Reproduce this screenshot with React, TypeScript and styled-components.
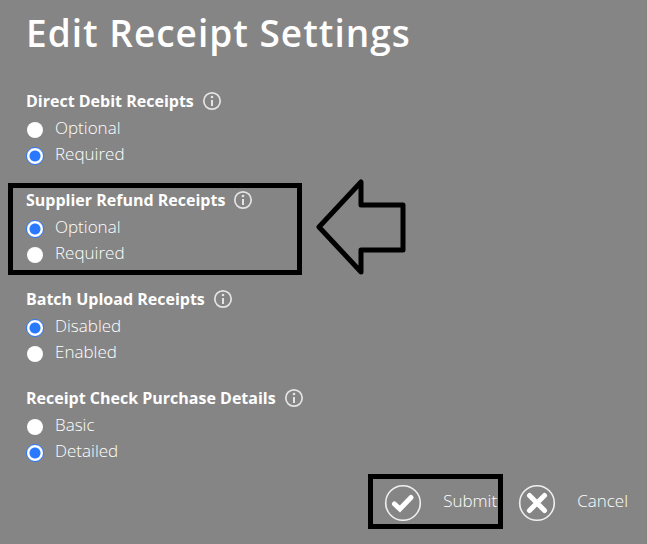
import React from "react";
import styled, { createGlobalStyle } from "styled-components";

const GlobalStyle = createGlobalStyle`
  *, *::before, *::after {
    box-sizing: border-box;
  }
  body {
    margin: 0;
    background: #858585;
    color: #fff;
    font-family: "Open Sans", "Noto Sans", sans-serif;
    font-size: 17px;
    font-weight: 300;
  }
`;

const Form = styled.form`
  padding: 8px 19px 15px 26px;
`;

const Title = styled.h1`
  margin: 0 0 30px;
  font-size: 37px;
  line-height: 50px;
  font-weight: 600;
  letter-spacing: 1px;
`;

const Groups = styled.div`
  display: flex;
  flex-direction: column;
  gap: 20px;
`;

const Group = styled.div`
  position: relative;
`;

const GroupHeading = styled.div`
  display: flex;
  align-items: center;
  gap: 8px;
  height: 27px;
  padding-bottom: 2px;
`;

const GroupName = styled.span`
  font-size: 16px;
  font-weight: 700;
  line-height: 26px;
`;

const InfoButton = styled.button`
  display: flex;
  padding: 0;
  border: 0;
  background: none;
  color: #e4e4e4;
  cursor: pointer;
`;

const Option = styled.label`
  display: flex;
  align-items: center;
  gap: 11px;
  height: 26px;
  line-height: 26px;
  cursor: pointer;
`;

const Radio = styled.input`
  appearance: none;
  flex: none;
  width: 18px;
  height: 18px;
  margin: 3px 0 0;
  border: 1px solid transparent;
  border-radius: 50%;
  background: #fff padding-box;

  &:checked {
    border-color: #2979ff;
    background: radial-gradient(circle, #2979ff 5px, #fff 6px);
  }
`;

const Frame = styled.div`
  position: absolute;
  inset: -4px auto -9px -18px;
  width: 294px;
  border: 5px solid #000;
  pointer-events: none;
`;

const Arrow = styled.svg`
  position: absolute;
  top: -9px;
  left: 289px;
  pointer-events: none;
`;

const Actions = styled.div`
  display: flex;
  justify-content: flex-end;
  gap: 21px;
  margin-top: 20px;
`;

const ActionButton = styled.button`
  position: relative;
  display: flex;
  align-items: center;
  gap: 21px;
  padding: 0;
  border: 0;
  background: none;
  color: inherit;
  font: inherit;
  line-height: 26px;
  cursor: pointer;
`;

const ActionLabel = styled.span`
  padding-bottom: 4px;
`;

const ActionFrame = styled.span`
  position: absolute;
  inset: -10px -6px -7px -16px;
  border: 5px solid #000;
  pointer-events: none;
`;

const InfoIcon = () => (
  <svg width="20" height="20" viewBox="0 0 20 20" fill="none" aria-hidden="true">
    <circle cx="10" cy="10" r="8.2" stroke="currentColor" strokeWidth="1.7" />
    <path d="M10 9v6" stroke="currentColor" strokeWidth="2" />
    <circle cx="10" cy="6" r="1.3" fill="currentColor" />
  </svg>
);

const CheckIcon = () => (
  <svg width="38" height="38" viewBox="0 0 38 38" fill="none" aria-hidden="true">
    <circle cx="19" cy="19" r="17.3" stroke="#f0f0f0" strokeWidth="1.6" />
    <path d="M10.5 20l5.4 5L27 13.5" stroke="#fff" strokeWidth="5" strokeLinecap="round" />
  </svg>
);

const CrossIcon = () => (
  <svg width="38" height="38" viewBox="0 0 38 38" fill="none" aria-hidden="true">
    <circle cx="19" cy="19" r="17.3" stroke="#f0f0f0" strokeWidth="1.6" />
    <path d="M11.5 11.5l15 15M26.5 11.5l-15 15" stroke="#fff" strokeWidth="5" strokeLinecap="round" />
  </svg>
);

const settings = [
  { id: "direct-debit", name: "Direct Debit Receipts", options: ["Optional", "Required"], value: "Required" },
  { id: "supplier-refund", name: "Supplier Refund Receipts", options: ["Optional", "Required"], value: "Optional", highlighted: true },
  { id: "batch-upload", name: "Batch Upload Receipts", options: ["Disabled", "Enabled"], value: "Disabled" },
  { id: "purchase-details", name: "Receipt Check Purchase Details", options: ["Basic", "Detailed"], value: "Detailed" },
];

export default function App() {
  return (
    <>
      <GlobalStyle />
      <Form onSubmit={(event: React.FormEvent) => event.preventDefault()}>
        <Title>Edit Receipt Settings</Title>
        <Groups>
          {settings.map((setting) => (
            <Group key={setting.id} role="radiogroup" aria-labelledby={setting.id}>
              <GroupHeading>
                <GroupName id={setting.id}>{setting.name}</GroupName>
                <InfoButton type="button" aria-label={`About ${setting.name}`}>
                  <InfoIcon />
                </InfoButton>
              </GroupHeading>
              {setting.options.map((option) => (
                <Option key={option}>
                  <Radio type="radio" name={setting.id} value={option} defaultChecked={option === setting.value} />
                  {option}
                </Option>
              ))}
              {setting.highlighted && (
                <>
                  <Frame />
                  <Arrow width="92" height="98" viewBox="0 0 92 98" fill="none" aria-hidden="true">
                    <path d="M4 49L46 4V27H88V72H46V94Z" stroke="#000" strokeWidth="5" strokeLinejoin="round" />
                  </Arrow>
                </>
              )}
            </Group>
          ))}
        </Groups>
        <Actions>
          <ActionButton type="submit">
            <CheckIcon />
            <ActionLabel>Submit</ActionLabel>
            <ActionFrame />
          </ActionButton>
          <ActionButton type="button">
            <CrossIcon />
            <ActionLabel>Cancel</ActionLabel>
          </ActionButton>
        </Actions>
      </Form>
    </>
  );
}
